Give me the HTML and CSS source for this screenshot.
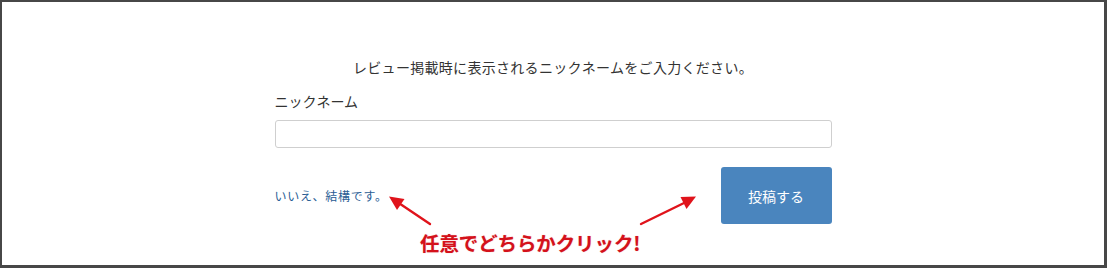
FILE: index.html
```html
<!DOCTYPE html>
<html lang="ja">
<head>
<meta charset="utf-8">
<link rel="stylesheet" href="styles.css">
</head>
<body>
<div class="page">
  <div class="form">
    <p class="lead">レビュー掲載時に表示されるニックネームをご入力ください。</p>
    <label class="label" for="nick">ニックネーム</label>
    <input class="input" id="nick" type="text">
    <div class="actions">
      <a class="decline" href="#">いいえ、結構です。</a>
      <button class="submit" type="button">投稿する</button>
    </div>
  </div>
  <svg class="arrows" width="1107" height="268" viewBox="0 0 1107 268">
    <line x1="430" y1="224" x2="401" y2="204.5" stroke="#e0131b" stroke-width="2.4" stroke-linecap="round"/>
    <polygon points="389,196.5 404.5,199 397,210" fill="#e0131b"/>
    <line x1="641" y1="224" x2="684" y2="203" stroke="#e0131b" stroke-width="2.4" stroke-linecap="round"/>
    <polygon points="696,196.5 686.5,209 680.5,197" fill="#e0131b"/>
  </svg>
  <div class="note">任意でどちらかクリック!</div>
</div>
</body>
</html>
```
FILE: styles.css
```css
html, body {
  margin: 0;
  padding: 0;
  background: #fff;
}
.page {
  position: relative;
  box-sizing: border-box;
  width: 1107px;
  height: 268px;
  border-style: solid;
  border-color: #474747;
  border-width: 2px 3px 3px 2px;
  font-family: "Noto Sans CJK JP", "Noto Sans", sans-serif;
  color: #333;
}
.form {
  width: 557px;
  margin: 0 auto;
  padding-top: 55px;
  display: flex;
  flex-direction: column;
}
.lead {
  margin: 0;
  font-size: 14px;
  line-height: 20px;
  letter-spacing: 0.3px;
  text-align: center;
}
.label {
  margin-top: 14px;
  font-size: 14px;
  line-height: 20px;
}
.input {
  margin-top: 9px;
  box-sizing: border-box;
  height: 28px;
  border: 1px solid #cfcfcf;
  border-radius: 3px;
  padding: 0 8px;
  font-size: 14px;
}
.actions {
  margin-top: 19px;
  display: flex;
  align-items: center;
  justify-content: space-between;
}
.decline {
  font-size: 12px;
  line-height: 18px;
  letter-spacing: 0.7px;
  color: #2a5d94;
  text-decoration: none;
}
.submit {
  width: 111px;
  height: 57px;
  border: none;
  border-radius: 3px;
  background: #4a85be;
  color: #fff;
  font-family: "Noto Sans CJK JP", "Noto Sans", sans-serif;
  font-size: 14px;
  padding: 0;
}
.arrows {
  position: absolute;
  left: -2px;
  top: -2px;
}
.note {
  position: absolute;
  left: 418px;
  top: 228px;
  font-size: 19.4px;
  line-height: 26px;
  font-weight: bold;
  color: #d4111b;
  text-shadow: 0 0 1px rgba(200, 0, 0, 0.4);
  white-space: nowrap;
}
```
